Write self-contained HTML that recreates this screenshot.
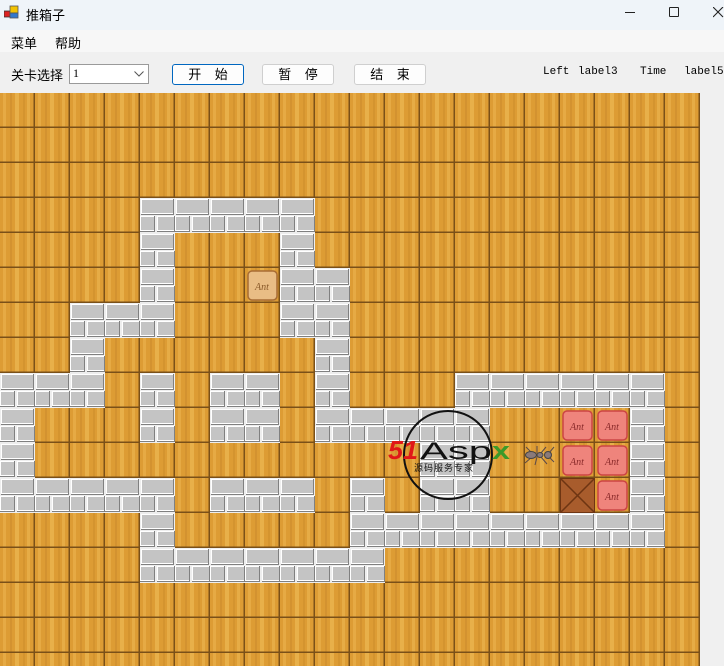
<!DOCTYPE html>
<html><head><meta charset="utf-8"><style>
*{margin:0;padding:0;box-sizing:border-box}
body{width:724px;height:666px;overflow:hidden;background:#f0f0f0;font-family:"Liberation Sans","Noto Sans CJK SC",sans-serif;position:relative}
.t{position:absolute;white-space:nowrap}
#title{position:absolute;left:0;top:0;width:724px;height:30px;background:#eff4f9}
#menu{position:absolute;left:0;top:30px;width:724px;height:22px;background:#f7f7f7}
.btn{position:absolute;top:64px;height:21px;width:72px;border:1px solid #cfcfcf;border-radius:3px;background:#fdfdfd;font-size:13px;text-align:center;line-height:19px;font-family:"Liberation Sans","Noto Sans CJK SC",sans-serif;word-spacing:10px}
.lab{position:absolute;top:66px;font-family:"Liberation Mono","Noto Serif CJK SC",monospace;font-size:11px}
</style></head><body>
<div id="title">
 <svg style="position:absolute;left:4px;top:5px" width="16" height="14"><rect x="0" y="6" width="6" height="6" fill="#d22" stroke="#333" stroke-width=".8"/><rect x="6" y="1" width="8" height="7" fill="#f2c200" stroke="#555" stroke-width=".8"/><rect x="6" y="8" width="8" height="5" fill="#37c" stroke="#555" stroke-width=".8"/></svg>
 <div class="t" style="left:26px;top:5px;font-size:13px">推箱子</div>
 <div style="position:absolute;left:625px;top:12px;width:10px;height:1px;background:#222"></div>
 <div style="position:absolute;left:669px;top:7px;width:10px;height:10px;border:1px solid #222;border-radius:1px"></div>
 <svg style="position:absolute;left:713px;top:7px" width="11" height="11"><path d="M0 0L10 10M10 0L0 10" stroke="#222" stroke-width="1.1"/></svg>
</div>
<div id="menu">
 <div class="t" style="left:11px;top:3px;font-size:13px">菜单</div>
 <div class="t" style="left:55px;top:3px;font-size:13px">帮助</div>
</div>
<div class="t" style="left:11px;top:65px;font-size:13px">关卡选择</div>
<div style="position:absolute;left:69px;top:64px;width:80px;height:20px;border:1px solid #9a9a9a;background:#fff"><span style="position:absolute;left:3px;top:1px;font-size:12px;font-family:'Liberation Serif',serif">1</span><svg style="position:absolute;left:64px;top:6px" width="10" height="6"><path d="M0.5 0.5L5 5L9.5 0.5" stroke="#555" fill="none"/></svg></div>
<div class="btn" style="left:172px;border:1px solid #0067c0">开 始</div>
<div class="btn" style="left:262px">暂 停</div>
<div class="btn" style="left:354px">结 束</div>
<div class="lab" style="left:543px">Left</div>
<div class="lab" style="left:578px">label3</div>
<div class="lab" style="left:640px">Time</div>
<div class="lab" style="left:684px">label5</div>

<svg style="position:absolute;left:0;top:93px" width="700" height="573" xmlns="http://www.w3.org/2000/svg">
<defs>
<pattern id="fl" width="35" height="35" patternUnits="userSpaceOnUse">
<rect width="35" height="35" fill="#dd9c34"/>
<rect x="3" width="3" height="35" fill="#e6aa44"/>
<rect x="10" width="2" height="35" fill="#d39230"/>
<rect x="15" width="4" height="35" fill="#e8b04a"/>
<rect x="23" width="2" height="35" fill="#d4942f"/>
<rect x="27" width="3" height="35" fill="#e6ac46"/>
<rect x="33.5" width="1.5" height="35" fill="#7a5018"/>
<rect y="33.5" width="35" height="1.5" fill="#7a5018"/>
</pattern>
<pattern id="wl" width="35" height="35" patternUnits="userSpaceOnUse">
<rect width="35" height="35" fill="#eeeeee"/>
<rect x="1" y="1" width="33" height="16" fill="#808080"/>
<rect x="1" y="1" width="32" height="15" fill="#ffffff"/>
<rect x="2" y="2" width="31" height="13" fill="#c4c4c4"/>
<rect x="0" y="18" width="15" height="16" fill="#808080"/>
<rect x="0" y="18" width="14" height="15" fill="#ffffff"/>
<rect x="1" y="19" width="13" height="13" fill="#c4c4c4"/>
<rect x="17" y="18" width="18" height="16" fill="#808080"/>
<rect x="17" y="18" width="17" height="15" fill="#ffffff"/>
<rect x="18" y="19" width="16" height="13" fill="#c4c4c4"/>
</pattern>
</defs>
<rect width="700" height="573" fill="url(#fl)"/>
<g fill="url(#wl)">
<rect x="140" y="105" width="175" height="35"/>
<rect x="140" y="140" width="35" height="35"/><rect x="280" y="140" width="35" height="35"/>
<rect x="140" y="175" width="35" height="35"/><rect x="280" y="175" width="70" height="35"/>
<rect x="70" y="210" width="105" height="35"/><rect x="280" y="210" width="70" height="35"/>
<rect x="70" y="245" width="35" height="35"/><rect x="315" y="245" width="35" height="35"/>
<rect x="0" y="280" width="105" height="35"/><rect x="140" y="280" width="35" height="35"/><rect x="210" y="280" width="70" height="35"/><rect x="315" y="280" width="35" height="35"/><rect x="455" y="280" width="210" height="35"/>
<rect x="0" y="315" width="35" height="35"/><rect x="140" y="315" width="35" height="35"/><rect x="210" y="315" width="70" height="35"/><rect x="315" y="315" width="175" height="35"/><rect x="630" y="315" width="35" height="35"/>
<rect x="0" y="350" width="35" height="35"/><rect x="420" y="350" width="70" height="35"/><rect x="630" y="350" width="35" height="35"/>
<rect x="0" y="385" width="175" height="35"/><rect x="210" y="385" width="105" height="35"/><rect x="350" y="385" width="35" height="35"/><rect x="420" y="385" width="70" height="35"/><rect x="630" y="385" width="35" height="35"/>
<rect x="140" y="420" width="35" height="35"/><rect x="350" y="420" width="315" height="35"/>
<rect x="140" y="455" width="245" height="35"/>
</g>
<rect x="248" y="178" width="29" height="29" rx="4" fill="#e9bd85" stroke="#a86c34" stroke-width="1.5"/>
<text x="262" y="197" font-size="10" font-style="italic" fill="#8a5a2a" text-anchor="middle" font-family="Liberation Serif,serif">Ant</text>
<g font-size="10" font-style="italic" fill="#8a2a2a" text-anchor="middle" font-family="Liberation Serif,serif">
<rect x="563" y="318" width="29" height="29" rx="4" fill="#ef847c" stroke="#c44" stroke-width="1.5"/><text x="577" y="337">Ant</text>
<rect x="598" y="318" width="29" height="29" rx="4" fill="#ef847c" stroke="#c44" stroke-width="1.5"/><text x="612" y="337">Ant</text>
<rect x="563" y="353" width="29" height="29" rx="4" fill="#ef847c" stroke="#c44" stroke-width="1.5"/><text x="577" y="372">Ant</text>
<rect x="598" y="353" width="29" height="29" rx="4" fill="#ef847c" stroke="#c44" stroke-width="1.5"/><text x="612" y="372">Ant</text>
<rect x="598" y="388" width="29" height="29" rx="4" fill="#ef847c" stroke="#c44" stroke-width="1.5"/><text x="612" y="407">Ant</text>
</g>
<rect x="560" y="385" width="35" height="35" fill="#a85c2c"/>
<path d="M561 386L594 419M594 386L561 419" stroke="#6e3512" stroke-width="1.5"/>
<rect x="560.5" y="385.5" width="34" height="34" fill="none" stroke="#6e3512"/>
<g stroke="#5a4a4a" stroke-width="1" fill="none">
<path d="M532 360l-6 -6M537 360l0 -7M541 360l5 -6M532 364l-7 6M537 364l-2 8M541 364l6 7M549 360l5 -6M549 364l5 5"/>
</g>
<ellipse cx="531" cy="362" rx="5.5" ry="3.5" fill="#8a7a7a" stroke="#444"/>
<ellipse cx="540" cy="362" rx="3" ry="2.5" fill="#8a7a7a" stroke="#444"/>
<ellipse cx="548" cy="362" rx="3.5" ry="3.5" fill="#8a7a7a" stroke="#444"/>
<circle cx="448" cy="362" r="44" fill="none" stroke="#111" stroke-width="2"/>
<text x="388" y="366" font-size="26" font-weight="bold" font-style="italic" fill="#e01818" font-family="Liberation Sans,sans-serif" textLength="30" lengthAdjust="spacingAndGlyphs">51</text>
<text x="420" y="366" font-size="24" fill="#111" font-family="Liberation Sans,sans-serif" textLength="72" lengthAdjust="spacingAndGlyphs">Asp</text>
<text x="492" y="366" font-size="24" font-weight="bold" fill="#3a9a2a" font-family="Liberation Sans,sans-serif" textLength="18" lengthAdjust="spacingAndGlyphs">x</text>
<text x="414" y="378" font-size="9" fill="#111" font-family="Noto Sans CJK SC,sans-serif" letter-spacing="1">源码服务专家</text>
</svg>
</body></html>
